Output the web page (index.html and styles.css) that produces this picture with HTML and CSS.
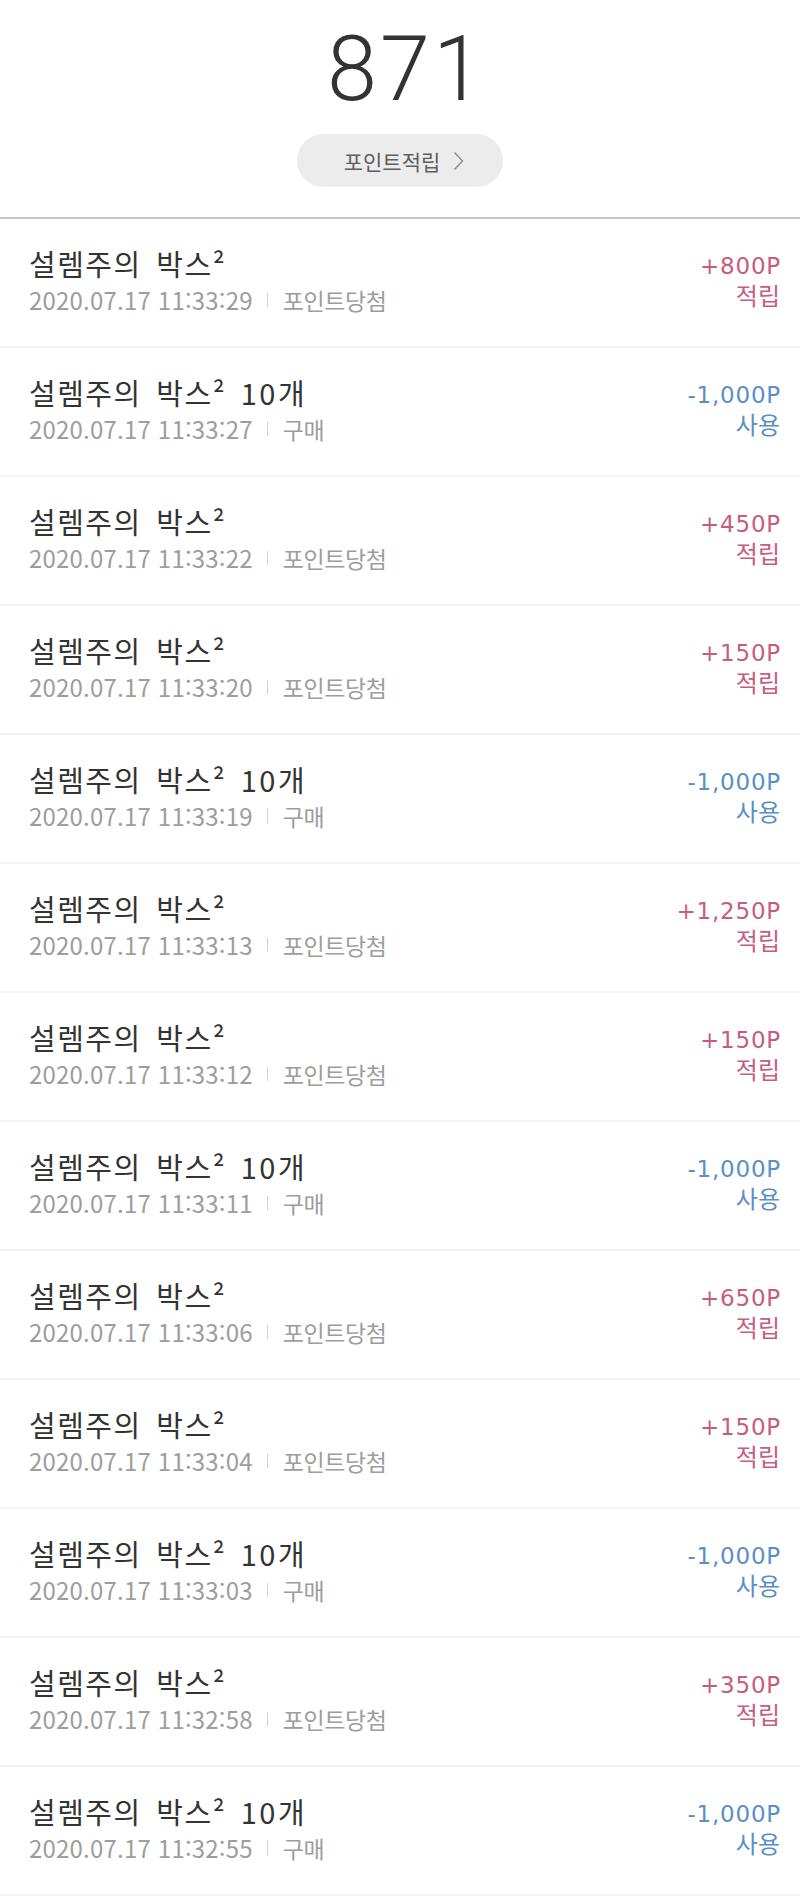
FILE: index.html
```html
<!DOCTYPE html>
<html lang="ko">
<head>
<meta charset="utf-8">
<title>포인트</title>
<link rel="stylesheet" href="styles.css">
</head>
<body>
<header class="summary">
  <div class="total">871</div>
  <button class="earn-btn" type="button"><span>포인트적립</span><svg class="chev" width="11" height="20" viewBox="0 0 11 20"><path d="M1.5 1.5 L9.5 10 L1.5 18.5" fill="none" stroke="#8a8a8a" stroke-width="1.4"/></svg></button>
</header>
<ul class="list">
  <li class="row"><div class="info"><div class="title">설렘주의 박스²</div><div class="meta"><span>2020.07.17 11:33:29</span><i class="bar"></i><span class="type">포인트당첨</span></div></div><div class="amt plus"><div class="val">+800P</div><div class="kind">적립</div></div></li>
  <li class="row"><div class="info"><div class="title">설렘주의 박스² <span class="num">10</span>개</div><div class="meta"><span>2020.07.17 11:33:27</span><i class="bar"></i><span class="type">구매</span></div></div><div class="amt minus"><div class="val">-1,000P</div><div class="kind">사용</div></div></li>
  <li class="row"><div class="info"><div class="title">설렘주의 박스²</div><div class="meta"><span>2020.07.17 11:33:22</span><i class="bar"></i><span class="type">포인트당첨</span></div></div><div class="amt plus"><div class="val">+450P</div><div class="kind">적립</div></div></li>
  <li class="row"><div class="info"><div class="title">설렘주의 박스²</div><div class="meta"><span>2020.07.17 11:33:20</span><i class="bar"></i><span class="type">포인트당첨</span></div></div><div class="amt plus"><div class="val">+150P</div><div class="kind">적립</div></div></li>
  <li class="row"><div class="info"><div class="title">설렘주의 박스² <span class="num">10</span>개</div><div class="meta"><span>2020.07.17 11:33:19</span><i class="bar"></i><span class="type">구매</span></div></div><div class="amt minus"><div class="val">-1,000P</div><div class="kind">사용</div></div></li>
  <li class="row"><div class="info"><div class="title">설렘주의 박스²</div><div class="meta"><span>2020.07.17 11:33:13</span><i class="bar"></i><span class="type">포인트당첨</span></div></div><div class="amt plus"><div class="val">+1,250P</div><div class="kind">적립</div></div></li>
  <li class="row"><div class="info"><div class="title">설렘주의 박스²</div><div class="meta"><span>2020.07.17 11:33:12</span><i class="bar"></i><span class="type">포인트당첨</span></div></div><div class="amt plus"><div class="val">+150P</div><div class="kind">적립</div></div></li>
  <li class="row"><div class="info"><div class="title">설렘주의 박스² <span class="num">10</span>개</div><div class="meta"><span>2020.07.17 11:33:11</span><i class="bar"></i><span class="type">구매</span></div></div><div class="amt minus"><div class="val">-1,000P</div><div class="kind">사용</div></div></li>
  <li class="row"><div class="info"><div class="title">설렘주의 박스²</div><div class="meta"><span>2020.07.17 11:33:06</span><i class="bar"></i><span class="type">포인트당첨</span></div></div><div class="amt plus"><div class="val">+650P</div><div class="kind">적립</div></div></li>
  <li class="row"><div class="info"><div class="title">설렘주의 박스²</div><div class="meta"><span>2020.07.17 11:33:04</span><i class="bar"></i><span class="type">포인트당첨</span></div></div><div class="amt plus"><div class="val">+150P</div><div class="kind">적립</div></div></li>
  <li class="row"><div class="info"><div class="title">설렘주의 박스² <span class="num">10</span>개</div><div class="meta"><span>2020.07.17 11:33:03</span><i class="bar"></i><span class="type">구매</span></div></div><div class="amt minus"><div class="val">-1,000P</div><div class="kind">사용</div></div></li>
  <li class="row"><div class="info"><div class="title">설렘주의 박스²</div><div class="meta"><span>2020.07.17 11:32:58</span><i class="bar"></i><span class="type">포인트당첨</span></div></div><div class="amt plus"><div class="val">+350P</div><div class="kind">적립</div></div></li>
  <li class="row"><div class="info"><div class="title">설렘주의 박스² <span class="num">10</span>개</div><div class="meta"><span>2020.07.17 11:32:55</span><i class="bar"></i><span class="type">구매</span></div></div><div class="amt minus"><div class="val">-1,000P</div><div class="kind">사용</div></div></li>
</ul>
</body>
</html>
```

FILE: styles.css
```css
* { box-sizing: border-box; }
html, body { margin: 0; padding: 0; background: #fff; }
body {
  font-family: "Noto Sans CJK KR", "Noto Sans", sans-serif;
  color: #333;
}
.summary {
  display: flex;
  flex-direction: column;
  align-items: center;
  padding-top: 25px;
  height: 219px;
  border-bottom: 2px solid #c4c4c4;
}
.total {
  font-family: Roboto, "Noto Sans", sans-serif;
  font-weight: 300;
  font-size: 90px;
  line-height: 90px;
  letter-spacing: 3px;
  padding-left: 13px;
  color: #333;
}
.earn-btn {
  margin-top: 19px;
  width: 206px;
  height: 53px;
  border: 0;
  border-radius: 27px;
  background: #ececec;
  display: flex;
  align-items: center;
  justify-content: center;
  gap: 13px;
  padding: 0 0 0 8px;
  font-family: "Noto Sans CJK KR", sans-serif;
  font-size: 21px;
  color: #5e5e5e;
}
.chev { display: block; }
.list { list-style: none; margin: 0; padding: 0; }
.row {
  display: flex;
  justify-content: space-between;
  align-items: flex-start;
  height: 129px;
  padding: 26px 20px 0 29px;
  border-bottom: 2px solid #f3f3f3;
}
.title {
  font-size: 29px;
  line-height: 36px;
  color: #333;
  letter-spacing: 1.5px;
  word-spacing: 5px;
}
.title .num {
  letter-spacing: 2.5px;
  word-spacing: 0;
}
.meta {
  display: flex;
  align-items: center;
  margin-top: 4px;
  font-size: 24px;
  line-height: 30px;
  color: #9d9d9d;
  letter-spacing: 0.2px;
}
.meta .type { letter-spacing: -0.4px; font-size: 23px; }
.bar {
  display: inline-block;
  width: 1px;
  height: 14px;
  background: #d2d2d2;
  margin: 0 15px 0 14px;
}
.amt {
  text-align: right;
  padding-top: 6px;
  font-size: 24px;
  line-height: 30px;
}
.amt .val {
  font-family: "DejaVu Sans", "Noto Sans CJK KR", sans-serif;
  font-size: 23px;
  letter-spacing: 0.8px;
  margin-right: -1px;
}
.amt .kind { line-height: 28px; }
.plus { color: #c65c80; }
.minus { color: #5a8fc6; }
```
